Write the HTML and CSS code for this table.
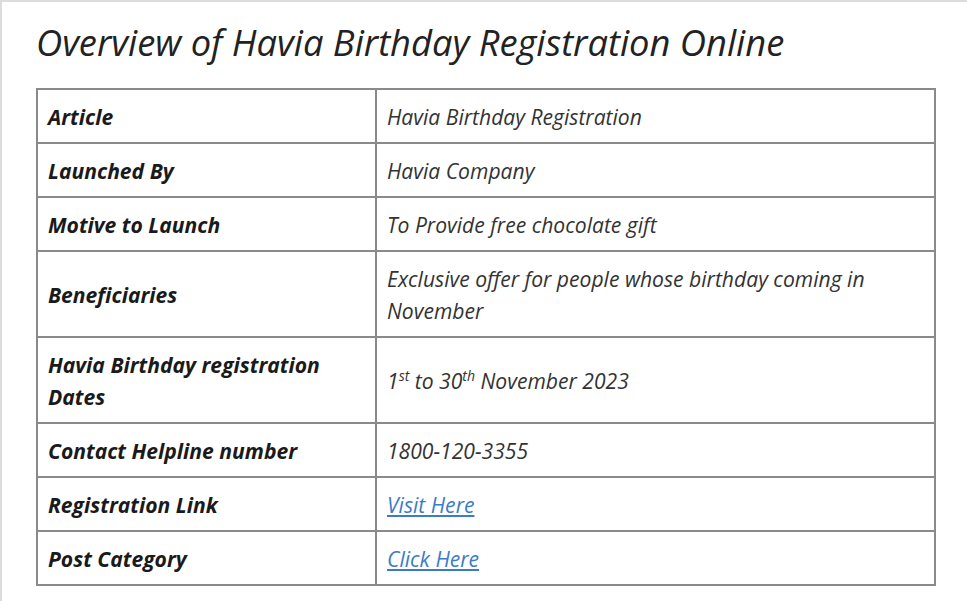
FILE: index.html
```html
<!DOCTYPE html>
<html>
<head>
<meta charset="utf-8">
<link rel="stylesheet" href="styles.css">
</head>
<body>
<div class="page">
  <h2 class="title">Overview of Havia Birthday Registration Online</h2>
  <table class="info">
    <tbody>
      <tr><th>Article</th><td>Havia Birthday Registration</td></tr>
      <tr><th>Launched By</th><td>Havia Company</td></tr>
      <tr><th>Motive to Launch</th><td>To Provide free chocolate gift</td></tr>
      <tr><th>Beneficiaries</th><td>Exclusive offer for people whose birthday coming in November</td></tr>
      <tr><th>Havia Birthday registration Dates</th><td>1<sup>st</sup> to 30<sup>th</sup> November 2023</td></tr>
      <tr><th>Contact Helpline number</th><td>1800-120-3355</td></tr>
      <tr><th>Registration Link</th><td><a href="#">Visit Here</a></td></tr>
      <tr><th>Post Category</th><td><a href="#">Click Here</a></td></tr>
    </tbody>
  </table>
</div>
</body>
</html>
```
FILE: styles.css
```css
html, body {
  margin: 0;
  padding: 0;
  background: #fff;
}
.page {
  box-sizing: border-box;
  width: 967px;
  height: 601px;
  border-top: 2px solid #dcdcdc;
  border-left: 2px solid #dcdcdc;
  padding: 17px 0 0 34px;
  font-family: "Open Sans", sans-serif;
  color: #222;
  overflow: hidden;
}
.title {
  margin: 0 0 22px 0;
  font-size: 36.3px;
  font-weight: 400;
  font-style: italic;
  line-height: 47px;
  color: #222;
}
.info {
  border-collapse: collapse;
  width: 900px;
  font-size: 21.1px;
  font-style: italic;
  line-height: 32px;
}
.info th, .info td {
  border: 2px solid #8a8a8a;
  padding: 11px 10px 9px 10px;
  text-align: left;
  vertical-align: middle;
}
.info th {
  width: 317px;
  font-weight: 700;
  color: #1a1a1a;
}
.info td {
  font-weight: 400;
  color: #333;
}
.info sup {
  font-size: 14px;
  line-height: 0;
  vertical-align: 8px;
}
.info a {
  color: #3b7bc8;
  text-decoration: underline;
}
```
